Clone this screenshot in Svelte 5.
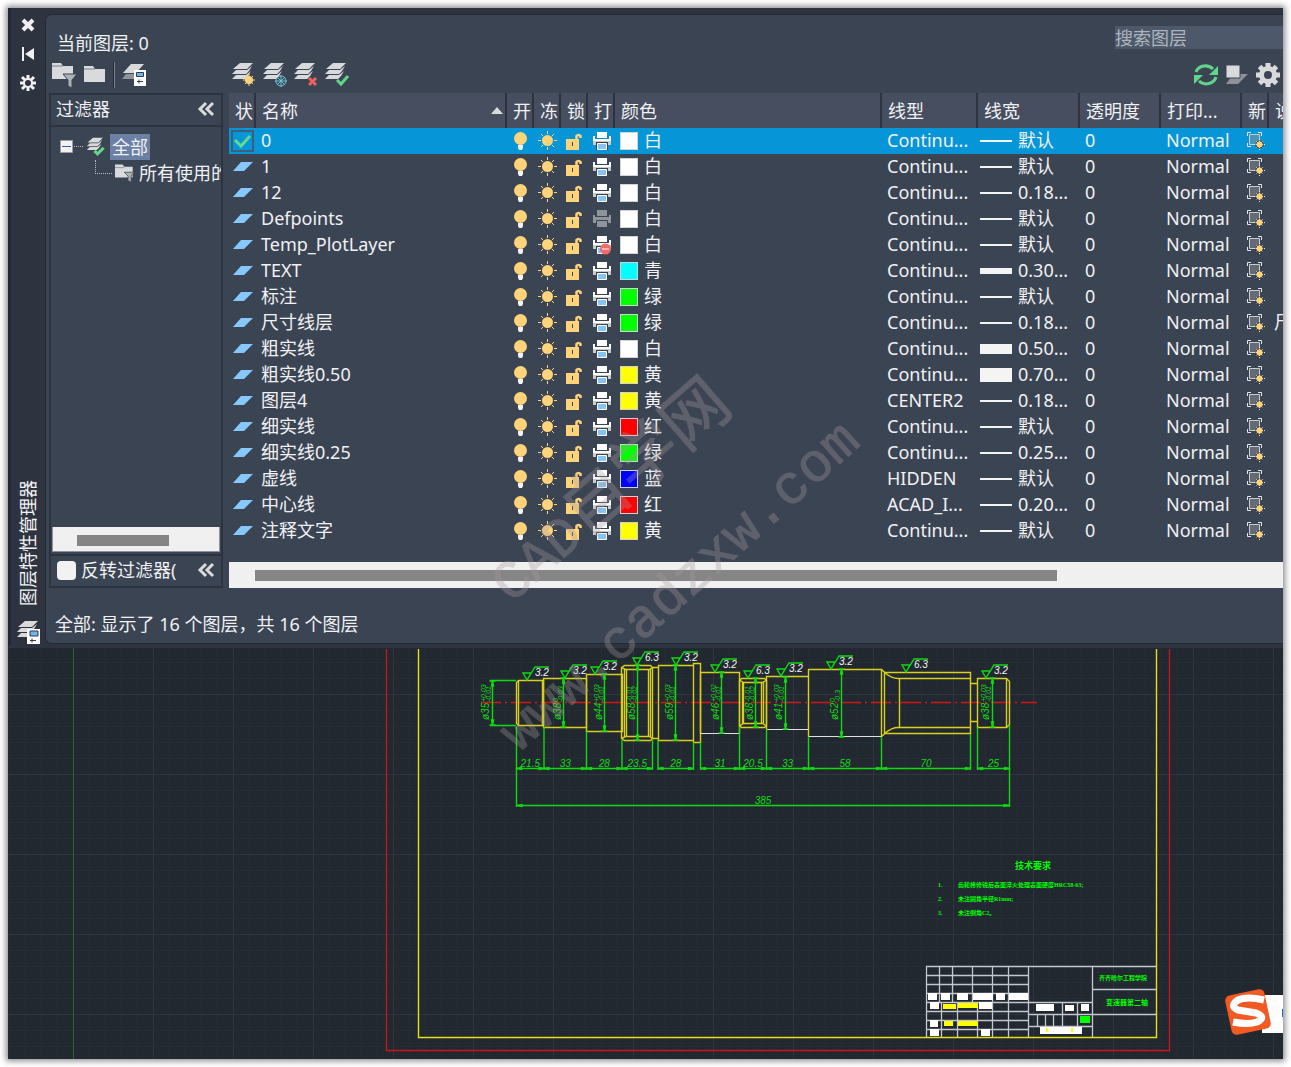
<script>
  let search = $state('');
  let invert = $state(false);
  let current = $state('0');

  let layers = $state([
    { name: '0', color: '#ffffff', colorName: '白', type: 'Continu...', weight: '默认', bar: 2 },
    { name: '1', color: '#ffffff', colorName: '白', type: 'Continu...', weight: '默认', bar: 2 },
    { name: '12', color: '#ffffff', colorName: '白', type: 'Continu...', weight: '0.18...', bar: 2 },
    { name: 'Defpoints', color: '#ffffff', colorName: '白', type: 'Continu...', weight: '默认', bar: 2, plot: 'off' },
    { name: 'Temp_PlotLayer', color: '#ffffff', colorName: '白', type: 'Continu...', weight: '默认', bar: 2, plot: 'no' },
    { name: 'TEXT', color: '#00ffff', colorName: '青', type: 'Continu...', weight: '0.30...', bar: 6 },
    { name: '标注', color: '#00ff00', colorName: '绿', type: 'Continu...', weight: '默认', bar: 2 },
    { name: '尺寸线层', color: '#00ff00', colorName: '绿', type: 'Continu...', weight: '0.18...', bar: 2, note: '尺' },
    { name: '粗实线', color: '#ffffff', colorName: '白', type: 'Continu...', weight: '0.50...', bar: 10 },
    { name: '粗实线0.50', color: '#ffff00', colorName: '黄', type: 'Continu...', weight: '0.70...', bar: 14 },
    { name: '图层4', color: '#ffff00', colorName: '黄', type: 'CENTER2', weight: '0.18...', bar: 2 },
    { name: '细实线', color: '#ff0000', colorName: '红', type: 'Continu...', weight: '默认', bar: 2 },
    { name: '细实线0.25', color: '#00ff00', colorName: '绿', type: 'Continu...', weight: '0.25...', bar: 2 },
    { name: '虚线', color: '#0000ff', colorName: '蓝', type: 'HIDDEN', weight: '默认', bar: 2 },
    { name: '中心线', color: '#ff0000', colorName: '红', type: 'ACAD_I...', weight: '0.20...', bar: 2 },
    { name: '注释文字', color: '#ffff00', colorName: '黄', type: 'Continu...', weight: '默认', bar: 2 }
  ]);

  // grid lines of the model space
  const gridX = [];
  for (let x = 9.5; x < 1283; x += 16) gridX.push(x);
  const gridY = [];
  for (let y = 662.5; y < 1059; y += 16) gridY.push(y);

  // lengths along the shaft: [from, to, text]
  const lengths = [
    [516.5, 544, '21.5'],
    [544, 586.5, '33'],
    [586.5, 622, '28'],
    [622, 652.5, '23.5'],
    [658, 693.5, '28'],
    [700.5, 739.5, '31'],
    [739.5, 766.5, '20.5'],
    [766.5, 808.5, '33'],
    [808.5, 881.5, '58'],
    [970.5, 881.5, '70'],
    [977.5, 1009.5, '25']
  ];

  const extensions = [
    [516.5, 726], [544, 727], [586.5, 731], [622, 740], [652.5, 740], [658, 740], [693.5, 742], [700.5, 742],
    [739.5, 727], [766.5, 729], [808.5, 737], [881.5, 737], [970.5, 734], [977.5, 727], [1009.5, 725]
  ];

  const diameters = [
    { x: 492.5, t: 681, b: 725, lx: 489, d: 'ø35', up: '+0.03', lo: '-0.01' },
    { x: 563.5, t: 678, b: 727, lx: 561, d: 'ø38', up: '0', lo: '-0.03' },
    { x: 604.5, t: 674, b: 731, lx: 602, d: 'ø44', up: '+0.03', lo: '-0.01' },
    { x: 637.5, t: 665, b: 740, lx: 635, d: 'ø58', up: '-0.01', lo: '-0.02' },
    { x: 675.5, t: 665, b: 740, lx: 673, d: 'ø59', up: '+0.03', lo: '-0.01' },
    { x: 721.5, t: 672, b: 733, lx: 719, d: 'ø46', up: '+0.02', lo: '-0.01' },
    { x: 755.5, t: 678, b: 727, lx: 753, d: 'ø38', up: '-0.01', lo: '-0.02' },
    { x: 785.5, t: 677, b: 729, lx: 782, d: 'ø41', up: '+0.03', lo: '-0.01' },
    { x: 841.5, t: 669, b: 737, lx: 838, d: 'ø52', up: '0', lo: '-0.3' },
    { x: 992.5, t: 678, b: 727, lx: 989, d: 'ø38', up: '+0.03', lo: '-0.01' }
  ];

  const roughness = [
    [527, 680, '3.2'], [565, 678, '3.2'], [595, 674, '3.2'], [637, 665, '6.3'], [676, 665, '3.2'],
    [715, 672, '3.2'], [748, 678, '6.3'], [781, 676, '3.2'], [831, 669, '3.2'], [906, 672, '6.3'], [986, 678, '3.2']
  ];

  // filled cells of the title block: [x, y, w, h]
  const whiteCells = [
    [928, 993, 9, 7], [941, 993, 9, 7], [957, 993, 11, 7], [973, 993, 20, 7], [996, 993, 9, 7], [1009, 993, 19, 7],
    [930, 1002, 9, 7], [979, 1002, 13, 7], [930, 1020, 8, 7], [930, 1029, 9, 7], [981, 1029, 9, 7],
    [1036, 1004, 18, 7], [1065, 1005, 9, 6], [1081, 1004, 8, 7], [1040, 1027, 42, 7]
  ];
  const yellowCells = [
    [943, 1004, 13, 5], [958, 1003, 20, 5], [944, 1021, 9, 5], [958, 1021, 20, 5], [1046, 1028, 2, 4], [1071, 1028, 2, 4]
  ];
</script>

{#snippet stack()}
  <path d="M9 1h13l-6 6H2z" fill="#d9dadc" />
  <path d="M1 12l4-4h11l5-4-3 5-3 3zM1 17l4-4h10l5-4-3 5-3 3z" fill="#d9dadc" />
{/snippet}

{#snippet chevrons()}
  <svg width="18" height="16" viewBox="0 0 18 16" fill="none" stroke="#d9dadc" stroke-width="3">
    <path d="M9 2L3 8l6 6M16 2l-6 6 6 6" />
  </svg>
{/snippet}

{#snippet cog(color, hole)}
  <g fill={color}>
    {#each [0, 45, 90, 135] as a}
      <rect x="9.5" y="0" width="5" height="24" transform="rotate({a} 12 12)" />
    {/each}
    <circle cx="12" cy="12" r="9" />
    <circle cx="12" cy="12" r="4" fill={hole} />
  </g>
{/snippet}

<main class="window">
  <section class="palette">
    <aside class="rail">
      <button aria-label="关闭">
        <svg width="14" height="14" viewBox="0 0 14 14"><path d="M2 2l10 10M12 2L2 12" stroke="#f0f0f0" stroke-width="4" /></svg>
      </button>
      <button aria-label="自动隐藏">
        <svg width="14" height="14" viewBox="0 0 14 14" fill="#f0f0f0"><path d="M1 0h2v14H1zM4 7l9-6v12z" /></svg>
      </button>
      <button aria-label="特性">
        <svg width="16" height="16" viewBox="0 0 16 16">
          <g stroke="#f0f0f0" stroke-width="3"><path d="M8 0v16M0 8h16M2 2l12 12M14 2L2 14" /></g>
          <circle cx="8" cy="8" r="5" fill="#f0f0f0" /><circle cx="8" cy="8" r="3" fill="#2d333f" />
        </svg>
      </button>
      <span class="caption">图层特性管理器</span>
      <svg width="24" height="24" viewBox="0 0 24 24">
        {@render stack()}
        <path d="M11 9h13v15H11z" fill="#fff" /><path d="M14 11h8v5h-8z" fill="#6fb4ea" stroke="#333b48" />
        <path d="M14 20.5h6M16 18.500v4" stroke="#333b48" />
      </svg>
    </aside>

    <div class="panel">
      <div class="title-row">
        <span class="current">当前图层: {current}</span>
        <input class="search" type="text" aria-label="搜索图层" placeholder="搜索图层" bind:value={search} />
      </div>

      <div class="tool-row">
        <div class="tools left">
          <button aria-label="新建特性过滤器">
            <svg width="26" height="26" viewBox="0 0 26 26">
              <path d="M1 1h9l2 3h10v13H1z" fill="#d9dadc" /><path d="M1 4h11" stroke="#7c838e" />
              <path d="M12 12h14l-5 6v8l-4-2v-6z" fill="#aeb1b6" stroke="#3b4453" />
            </svg>
          </button>
          <button aria-label="新建组过滤器">
            <svg width="26" height="26" viewBox="0 0 26 26">
              <path d="M2 4h9l2 3h10v13H2z" fill="#d9dadc" /><path d="M2 7h11" stroke="#7c838e" />
            </svg>
          </button>
          <span class="sep"></span>
          <button aria-label="图层状态管理器">
            <svg width="26" height="26" viewBox="0 0 26 26">
              <path d="M11 2h13l-8 9H3z" fill="#d9dadc" /><path d="M6 12h8v5H2z" fill="#8f949c" />
              <path d="M14 8h12v16H14z" fill="#fff" /><path d="M16.500 10.500h7v4h-7z" fill="#6fb4ea" stroke="#333b48" />
              <path d="M17 19.500h6M19 17.500v4" stroke="#333b48" />
            </svg>
          </button>
        </div>
        <div class="tools">
          <button aria-label="新建图层">
            <svg width="26" height="26" viewBox="0 0 26 26">
              {@render stack()}
              <path d="M18 12v12M12 18h12M14 14l8 8M22 14l-8 8" stroke="#ffd37a" stroke-width="1" /><circle cx="18" cy="18" r="4" fill="#ffd37a" />
            </svg>
          </button>
          <button aria-label="在所有视口中冻结的新图层">
            <svg width="26" height="26" viewBox="0 0 26 26">
              {@render stack()}
              <circle cx="19" cy="19" r="5" fill="#3b4453" />
              <g fill="none" stroke="#6fc3d3"><circle cx="19" cy="19" r="5" /><path d="M19 13v12M13 19h12M15 15l8 8M23 15l-8 8" /></g>
            </svg>
          </button>
          <button aria-label="删除图层">
            <svg width="26" height="26" viewBox="0 0 26 26">
              {@render stack()}
              <path d="M16 16l7 7M23 16l-7 7" stroke="#f06060" stroke-width="3" />
            </svg>
          </button>
          <button aria-label="置为当前">
            <svg width="26" height="26" viewBox="0 0 26 26">
              {@render stack()}
              <path d="M13 18l4 4 7-8" fill="none" stroke="#5fd68a" stroke-width="3" />
            </svg>
          </button>
        </div>
        <div class="tools right">
          <button aria-label="刷新">
            <svg width="26" height="26" viewBox="0 0 26 26">
              <g fill="none" stroke="#62d58c" stroke-width="3"><path d="M3 10a10 9 0 0 1 17-3M23 15a10 9 0 0 1-17 4" /></g>
              <path d="M25 4v9h-9zM1 22v-9h9z" fill="#62d58c" />
            </svg>
          </button>
          <button aria-label="切换替代亮显">
            <svg width="26" height="26" viewBox="0 0 26 26">
              <path d="M9 12h15L14 22H2z" fill="#8d929a" /><path d="M2 3h14v13H2z" fill="#d9dadc" stroke="#3b4453" />
            </svg>
          </button>
          <button aria-label="设置">
            <svg width="24" height="24" viewBox="0 0 24 24">{@render cog('#d9dadc', '#3b4453')}</svg>
          </button>
        </div>
      </div>

      <div class="body">
        <div class="filters">
          <div class="filters-head">
            <span>过滤器</span>
            <button aria-label="收拢过滤器">{@render chevrons()}</button>
          </div>
          <div class="tree">
            <div class="node">
              <svg width="23" height="14" viewBox="0 0 23 14">
                <path d="M.5.5h12v12H.5z" fill="#f2f2f2" stroke="#9aa0a8" /><path d="M2 6.500h9" stroke="#3d55a5" />
                <path d="M14 6.500h9" stroke="#b8bcc2" stroke-dasharray="1 1" />
              </svg>
              <svg class="node-icon" width="20" height="20" viewBox="0 0 26 26">
                {@render stack()}
                <path d="M11 18l4 4 8-8" fill="none" stroke="#5fd68a" stroke-width="4" />
              </svg>
              <span class="picked">全部</span>
            </div>
            <div class="node child">
              <span class="elbow"></span>
              <svg class="node-icon" width="20" height="20" viewBox="0 0 26 26">
                <path d="M0 2h10l2 3h11v14H0z" fill="#d9dadc" /><path d="M0 6h12" stroke="#7c838e" />
                <path d="M12 12h13l-4 5v8l-4-2v-6z" fill="#aeb1b6" stroke="#3b4453" />
              </svg>
              <span class="child-name">所有使用的</span>
            </div>
          </div>
          <div class="tree-scroll"><span></span></div>
          <div class="filters-foot">
            <label><input type="checkbox" bind:checked={invert} /><span>反转过滤器(</span></label>
            <button aria-label="收拢">{@render chevrons()}</button>
          </div>
        </div>

        <div class="grid">
          <table>
            <colgroup>
              <col class="w-icon" /><col class="w-name" />
              <col class="w-icon" /><col class="w-icon" /><col class="w-icon" /><col class="w-icon" />
              <col /><col class="w-type" /><col class="w-weight" /><col class="w-mid" /><col class="w-mid" />
              <col class="w-icon" /><col class="w-note" />
            </colgroup>
            <thead>
              <tr>
                <th>状</th>
                <th><div class="sorted">名称<svg width="12" height="7" viewBox="0 0 12 7"><path d="M0 7l6-7 6 7z" fill="#d9dadc" /></svg></div></th>
                <th>开</th><th>冻</th><th>锁</th><th>打</th><th>颜色</th><th>线型</th><th>线宽</th>
                <th>透明度</th><th>打印...</th><th>新</th><th>说</th>
              </tr>
            </thead>
            <tbody>
              {#each layers as layer (layer.name)}
                <tr class:selected={layer.name === current}>
                  <td class="state">
                    {#if layer.name === current}
                      <svg width="23" height="22" viewBox="0 0 23 22">
                        <path d="M1 1h21v20H1z" fill="none" stroke="#3e5f7c" stroke-width="2" />
                        <path d="M4 10l6 6 9-10" fill="none" stroke="#62d992" stroke-width="3" />
                      </svg>
                    {:else}
                      <svg width="23" height="22" viewBox="0 0 23 22"><path d="M10 6h12l-9 9H2z" fill="#86c8fb" /></svg>
                    {/if}
                  </td>
                  <td>{layer.name}</td>
                  <td class="icon">
                    <button aria-label="开">
                      <svg width="20" height="20" viewBox="0 0 20 20"><circle cx="9.5" cy="7.5" r="6.500" fill="#ffd37a" /><path d="M7 14h5v3l-1 2H8l-1-2z" fill="#f0f2f4" /></svg>
                    </button>
                  </td>
                  <td class="icon">
                    <button aria-label="冻结">
                      <svg width="20" height="20" viewBox="0 0 20 20">
                        <circle cx="9.5" cy="9.5" r="5.500" fill="#ffd37a" />
                        <path d="M9.500 0v3M9.500 16v3M0 9.500h3M16 9.500h3M3 3l2 2M14 14l2 2M16 3l-2 2M5 14l-2 2" stroke="#ffd37a" />
                      </svg>
                    </button>
                  </td>
                  <td class="icon">
                    <button aria-label="锁定">
                      <svg width="20" height="20" viewBox="0 0 20 20">
                        <path d="M1 8h13v11H1z" fill="#ffd37a" /><path d="M11.500 8V5a2.500 2.500 0 0 1 4 0v2" fill="none" stroke="#ffd37a" stroke-width="2.500" />
                        <path d="M7 11h1v4H7z" fill="#3b4453" />
                      </svg>
                    </button>
                  </td>
                  <td class="icon">
                    <button aria-label="打印">
                      <svg width="20" height="20" viewBox="0 0 20 20">
                        {#if layer.plot === 'off'}
                          <path d="M5 1h10v6H5zM1 6h2v2h14V6h2v8H1z" fill="#8f949c" /><path d="M4.500 11.500h11v7h-11z" fill="#8f949c" stroke="#3b4453" />
                        {:else}
                          <path d="M5 1h10v6H5zM1 5h2v3h14V5h2v5H1z" fill="#fff" /><path d="M1 10h18v4H1z" fill="#c9cccf" />
                          <path d="M4 11h12v8H4z" fill="#3b4453" /><path d="M5.500 12.500h9v6h-9z" fill="#86c4f5" stroke="#fff" />
                          {#if layer.plot === 'no'}
                            <circle cx="13.500" cy="14" r="5.500" fill="#f26a6a" /><path d="M10 14h7" stroke="#fff" stroke-width="1" />
                          {/if}
                        {/if}
                      </svg>
                    </button>
                  </td>
                  <td><div class="color"><i style:background={layer.color}></i>{layer.colorName}</div></td>
                  <td>{layer.type}</td>
                  <td class="weight"><div><i style:height="{layer.bar}px"></i>{layer.weight}</div></td>
                  <td>0</td>
                  <td>Normal</td>
                  <td class="icon">
                    <button aria-label="新视口冻结">
                      <svg width="20" height="20" viewBox="0 0 20 20">
                        <path d="M3.500 3.500h10v10h-10z" fill="#8d929a" fill-opacity=".5" stroke="#c9cccf" />
                        <path d="M1.500 5V1.500H5M12 1.500h3.500V5M1.500 12v3.500H5" fill="none" stroke="#e4e6e8" />
                        <circle cx="13.500" cy="13.500" r="4" fill="#3b4453" />
                        <path d="M13.500 8v11M8 13.500h11M10 10l7 7M17 10l-7 7" stroke="#ffe3a0" stroke-dasharray="1 1" />
                        <circle cx="13.500" cy="13.500" r="3" fill="#ffd37a" />
                      </svg>
                    </button>
                  </td>
                  <td>{layer.note ?? ''}</td>
                </tr>
              {/each}
            </tbody>
          </table>
          <div class="grid-scroll"><span></span></div>
        </div>
      </div>

      <p class="status">全部: 显示了 16 个图层，共 16 个图层</p>
    </div>
  </section>

  <svg class="model" viewBox="8 648 1275 411">
    <rect x="8" y="648" width="1275" height="411" fill="#222830" />
    {#each gridX as x, i}
      <path d="M{x} 648V1059" stroke={i % 5 === 4 ? '#2f3642' : '#262d36'} />
    {/each}
    {#each gridY as y, i}
      <path d="M8 {y}H1283" stroke={i % 5 === 2 ? '#2f3642' : '#262d36'} />
    {/each}
    <path d="M73.500 648V1059" stroke="#236b27" />

    <path d="M386.500 649V1050.500H1169.500V649" fill="none" stroke="#d0141b" stroke-width="1.300" />
    <path d="M418.500 649V1037.500H1156.500V649" fill="none" stroke="#e6de1c" stroke-width="1.400" />

    <!-- shaft -->
    <path d="M481 702.500H1037" stroke="#d01818" stroke-width="1.500" stroke-dasharray="20 4 2 4" />
    <g fill="none" stroke="#d8d01c" stroke-width="1.400">
      <path d="M518.500 680.500H543.500V725.500H518.500L516.500 723.500V682.500zM518.500 680.500V725.500" />
      <path d="M543.500 678.500H586.500V727.500H543.500zM542.500 680V726" />
      <path d="M586.500 674.500H622.500V731.500H586.500z" />
      <path d="M624.500 665.500H650.500L652.500 667.500V738.500L650.500 740.500H624.500L621.500 738.500V667.500z" />
      <path d="M621.500 667.500L625.500 669.500H649.500L652.500 667.500M621.500 738.500L625.500 736.500H649.500L652.500 738.500M624.500 669V737M626.500 669V737M648.500 669V737M650.500 669V737" />
      <path d="M652.500 667.500H658.500V738.500H652.500M658.500 665.500H693.500V740.500H658.500zM693.500 663.500H700.500V742.500H693.500z" />
      <path d="M700.500 733.500V672.500H739.500V733.500" />
      <path d="M741.500 678.500H764.500L766.500 680.500V725.500L764.500 727.500H741.500L739.500 725.500V680.500z" />
      <path d="M739.500 680L743.500 682.500H762.500L766.500 680M739.500 726L743.500 723.500H762.500L766.500 726M742.500 682V724M743.500 682V724M761.500 682V724M763.500 682V724" />
      <path d="M766.500 729.500V676.500H808.500M808.500 736.500V669.500H881.500V736.500" />
      <path d="M881.500 669.500L885 672.500H970.500V733.500H885L881.500 736.500M884.500 672V734M885 673Q892 678.500 898 678.500H970M885 733Q892 727.500 898 727.500H970M899.500 678V728" />
      <path d="M970.500 683.500H977.500M970.500 721.500H977.500" />
      <path d="M977.500 678.500H1006.500L1009.500 681.500V724.500L1006.500 727.500H977.500zM1006.500 678.500V727.500" />
    </g>
    <path d="M700.500 733.500H739.500M766.500 729.500H808.500M808.500 736.500H881.500" stroke="#e0e0e0" />

    <!-- dimensions -->
    <g stroke="#12d812" stroke-width="1.400" fill="none">
      {#each extensions as [x, y]}
        <path d="M{x} {y}V770" />
      {/each}
      <path d="M516.500 768V807M1009.500 768V807M516.500 805.500H1009.500M490 680.500H516M490 725.500H516" />
      <path d="M517 805.500l5-1v2zM1009 805.500l-5-1v2z" fill="#12d812" />
      {#each lengths as [a, b]}
        <path d="M{a} 768.500H{b}" />
        <path d="M{Math.min(a, b)} 768.500l5-1v2zM{Math.max(a, b)} 768.500l-5-1v2z" fill="#12d812" />
      {/each}
      {#each diameters as d}
        <path d="M{d.x} {d.t}V{d.b}M{d.x - 3} {d.t}h6M{d.x - 3} {d.b}h6" />
        <path d="M{d.x} {d.t}l-1 5h2zM{d.x} {d.b}l-1-5h2z" fill="#12d812" />
      {/each}
      {#each roughness as [x, y]}
        <path d="M{x} {y}l-4-7h8zl8-13h14" />
      {/each}
    </g>
    <g class="dim">
      {#each lengths as [a, b, text]}
        <text x={(a + b) / 2} y="767" text-anchor="middle">{text}</text>
      {/each}
      <text x="763" y="804" text-anchor="middle">385</text>
      {#each diameters as d}
        <g transform="translate({d.lx} 720) rotate(-90)">
          <text>{d.d}</text>
          <text class="tol" x="18" y="-3">{d.up}</text>
          <text class="tol" x="18" y="2">{d.lo}</text>
        </g>
      {/each}
    </g>
    <g class="rough">
      {#each roughness as [x, y, text]}
        <text x={x + 8} y={y - 4}>{text}</text>
      {/each}
    </g>

    <!-- notes -->
    <g class="notes">
      <text class="big" x="1015" y="869">技术要求</text>
      <text x="938" y="887">1.</text><text x="958" y="887">齿轮棒修锐后表面淬火处理表面硬度HRC58-63;</text>
      <text x="938" y="901">2.</text><text x="958" y="901">未注圆角半径R1mm;</text>
      <text x="938" y="915">3.</text><text x="958" y="915">未注倒角C2。</text>
      <text x="1099" y="980">齐齐哈尔工程学院</text>
      <text class="mid" x="1106" y="1005">变速器第二轴</text>
    </g>

    <!-- title block -->
    <g stroke="#c4c7cc" stroke-width="1.300" fill="none">
      <path d="M926.500 1037V966.500H1156M1028.500 966V1037M1092.500 966V1037M1092 989.500H1156M1092 1014.500H1156M1028 1014.500H1092M1028 1002.500H1092M1028 1026.500H1092" />
      <path d="M926 975.500H1028M926 984.500H1028M926 993.500H1028M926 1002.500H1028M926 1011.500H1028M926 1020.500H1028M926 1029.500H1028" />
      <path d="M939.500 966V1002M952.500 966V1002M972.500 966V1002M992.500 966V1037M1008.500 966V1037M941.500 1002V1037M957.500 1002V1037M977.500 1002V1037" />
      <path d="M1037.500 1014V1026M1045.500 1014V1026M1053.500 1014V1026M1062.500 1002V1026M1077.500 1002V1026" />
    </g>
    {#each whiteCells as [x, y, w, h]}
      <rect {x} {y} width={w} height={h} fill="#fff" />
    {/each}
    {#each yellowCells as [x, y, w, h]}
      <rect {x} {y} width={w} height={h} fill="#ff0" />
    {/each}
    <rect x="1080" y="1016" width="10" height="7" fill="#0f0" />

    <!-- input method badge -->
    <rect x="1262" y="995" width="24" height="38" fill="#fff" />
    <rect x="1282" y="1009" width="3" height="8" fill="#1f6fc4" />
    <rect x="1228" y="992" width="40" height="40" rx="5" fill="#f15a22" transform="rotate(-12 1248 1012)" />
    <path d="M1264 1000Q1247 996 1238 1000Q1229 1006 1238 1010L1256 1013Q1267 1017 1257 1022Q1248 1025 1233 1022" fill="none" stroke="#fff" stroke-width="7" />
  </svg>

  <svg class="watermark" viewBox="8 8 1275 1051" aria-hidden="true">
    <g transform="translate(511 604) rotate(-41)">
      <text class="mark-latin">CAD</text>
      <text class="mark-cjk" x="99">自学网</text>
    </g>
    <text class="mark-latin" transform="translate(519 753) rotate(-42)">www.cadzxw.com</text>
  </svg>
</main>

<style>
  :global(body) {
    margin: 0;
    background: #fff;
  }

  .window {
    position: relative;
    margin: 8px;
    overflow: visible;
    box-shadow: 0 0 6px 2px #8a8a90;
    background: #2d333f;
    color: #f0f1f3;
    font-family: "Noto Sans", "Noto Sans CJK SC", sans-serif;
    font-size: 18px;
    line-height: 26px;
  }

  button {
    display: flex;
    align-items: center;
    justify-content: center;
    padding: 0;
    border: none;
    background: none;
    cursor: pointer;
  }

  svg {
    display: block;
    flex: none;
  }

  .palette {
    display: flex;
    padding-top: 6px;
    border-bottom: 4px solid #2d333f;
    border-left: 3px solid #232933;
  }

  .rail {
    display: flex;
    flex-direction: column;
    align-items: center;
    gap: 14px;
    width: 34px;
    padding-top: 3px;
  }

  .rail button {
    height: 15px;
  }

  .caption {
    margin-top: auto;
    writing-mode: vertical-rl;
    text-orientation: sideways;
    transform: rotate(180deg);
  }

  .panel {
    flex: 1;
    min-width: 0;
    border: 1px solid #232933;
    border-right: none;
    border-radius: 6px 0 0 6px;
    background: #3b4453;
  }

  .title-row {
    display: flex;
    justify-content: space-between;
    align-items: flex-start;
    height: 41px;
  }

  .current {
    padding: 15px 0 0 11px;
  }

  .search {
    box-sizing: border-box;
    width: 168px;
    height: 23px;
    margin-top: 11px;
    padding: 0;
    border: none;
    background: #4d586b;
    color: #f0f1f3;
    font: inherit;
  }

  .search::placeholder {
    color: #aeb4bf;
    opacity: 1;
  }

  .tool-row {
    display: flex;
    height: 37px;
  }

  .tools {
    display: flex;
    align-items: center;
    gap: 5px;
    padding-left: 2px;
  }

  .tools button {
    width: 26px;
    height: 26px;
  }

  .tools.left {
    box-sizing: border-box;
    width: 183px;
    padding-left: 5px;
  }

  .tools.right {
    margin-left: auto;
    padding-right: 2px;
  }

  .sep {
    width: 1px;
    height: 26px;
    border-left: 1px solid #232933;
    background: #7c838e;
  }

  .body {
    display: flex;
    gap: 6px;
    padding-left: 3px;
  }

  .filters {
    box-sizing: border-box;
    display: flex;
    flex-direction: column;
    width: 174px;
    border: 2px solid #2d333f;
  }

  .filters-head,
  .filters-foot {
    display: flex;
    align-items: center;
    justify-content: space-between;
    height: 30px;
    padding: 0 6px 0 5px;
  }

  .filters-head {
    height: 28px;
    padding-bottom: 2px;
    border-bottom: 2px solid #2d333f;
  }

  .filters-foot {
    height: 28px;
    padding-bottom: 2px;
    border-top: 2px solid #2d333f;
  }

  .filters-foot label {
    display: flex;
    align-items: center;
    gap: 5px;
    white-space: nowrap;
  }

  .filters-foot input {
    appearance: none;
    width: 19px;
    height: 19px;
    margin: 0 0 0 1px;
    border-radius: 4px;
    background: #f2f2f2;
  }

  .filters-foot input:checked {
    background: #0696d7;
  }

  .tree {
    flex: 1;
    padding-top: 7px;
    overflow: hidden;
  }

  .node {
    display: flex;
    align-items: center;
    height: 26px;
    padding-left: 9px;
    white-space: nowrap;
  }

  .node-icon {
    margin: 0 4px 0 3px;
  }

  .picked {
    padding: 0 2px;
    background: #6b80a3;
  }

  .child {
    padding-left: 44px;
  }

  .child-name {
    min-width: 0;
    overflow: hidden;
  }

  .elbow {
    flex: none;
    align-self: flex-start;
    width: 16px;
    height: 13px;
    border-left: 1px dotted #b8bcc2;
    border-bottom: 1px dotted #b8bcc2;
  }

  .tree-scroll {
    height: 24px;
    margin: 0 1px 2px;
    border: 1px solid #8d929a;
    border-top: none;
    background: #f0f0f0;
  }

  .tree-scroll span {
    display: block;
    width: 92px;
    height: 11px;
    margin: 8px 0 0 24px;
    background: #858585;
  }

  .grid {
    flex: 1;
    min-width: 0;
    display: flex;
    flex-direction: column;
    gap: 18px;
    overflow: hidden;
  }

  table {
    width: 100%;
    table-layout: fixed;
    border-collapse: separate;
    border-spacing: 0;
  }

  .w-icon {
    width: 27px;
  }

  .w-name {
    width: 251px;
  }

  .w-type {
    width: 96px;
  }

  .w-weight {
    width: 102px;
  }

  .w-mid {
    width: 81px;
  }

  .w-note {
    width: 14px;
  }

  th {
    height: 35px;
    padding: 0 0 0 6px;
    border-right: 2px solid #2d333f;
    background: #464e60;
    font-weight: normal;
    text-align: left;
    white-space: nowrap;
    overflow: hidden;
  }

  th:last-child {
    border-right: none;
  }

  .sorted {
    display: flex;
    align-items: center;
    justify-content: space-between;
    padding-right: 2px;
  }

  td {
    box-sizing: border-box;
    height: 26px;
    padding: 0 0 2px 5px;
    line-height: 24px;
    white-space: nowrap;
    overflow: hidden;
  }

  td.state {
    padding: 0 0 0 2px;
  }

  td.icon {
    padding: 0 0 0 4px;
  }

  td.weight {
    padding-left: 2px;
  }

  .color,
  .weight div {
    display: flex;
    align-items: center;
    gap: 6px;
  }

  .color i {
    box-sizing: border-box;
    width: 18px;
    height: 18px;
    margin-top: 2px;
    border: 1px solid #d0d3d8;
  }

  .weight i {
    width: 32px;
    margin-top: 2px;
    background: #f4f4f4;
  }

  .selected td {
    background: #0696d7;
  }

  .grid-scroll {
    height: 26px;
    padding-left: 26px;
    background: #f0f0f0;
  }

  .grid-scroll span {
    display: block;
    width: 78%;
    height: 11px;
    margin-top: 8px;
    background: #858585;
  }

  .status {
    height: 32px;
    margin: 0;
    padding: 23px 0 0 9px;
  }

  .model {
    width: 100%;
    height: auto;
  }

  .dim {
    fill: #12d812;
    font: italic 10px "Liberation Sans", sans-serif;
  }

  .tol {
    font-size: 7px;
  }

  .rough {
    fill: #f4f4f4;
    font: italic 10px "Liberation Sans", sans-serif;
  }

  .notes {
    fill: #0f0;
    font: bold 6px "Liberation Serif", "Noto Sans CJK SC", sans-serif;
  }

  .notes .big {
    font-size: 9px;
  }

  .notes .mid {
    font-size: 7px;
  }

  .watermark {
    position: absolute;
    top: 0;
    left: 0;
    width: 100%;
    height: 100%;
    fill: #a89ca0;
    stroke: #a89ca0;
    stroke-width: 1;
    opacity: 0.32;
    pointer-events: none;
  }

  .mark-latin {
    font: 55px "Liberation Mono", monospace;
  }

  .mark-cjk {
    font: 66px "Noto Sans CJK SC", sans-serif;
  }
</style>
